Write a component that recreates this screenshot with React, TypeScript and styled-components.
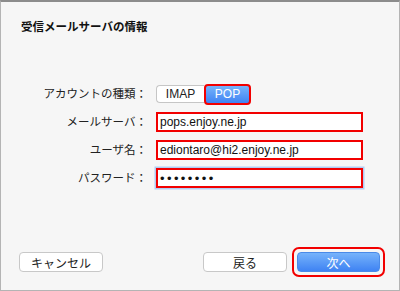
import React from 'react';
import styled, { createGlobalStyle } from 'styled-components';

const GlobalStyle = createGlobalStyle`
  html, body {
    margin: 0;
    padding: 0;
    background: #f6f6f6;
  }
  * {
    box-sizing: border-box;
  }
`;

const FONT = `"Liberation Sans", "Noto Sans CJK JP", sans-serif`;
const RED = '#f20000';
const BLUE_GRAD = 'linear-gradient(#76b3fb, #3f83f3)';

const Window = styled.div`
  width: 400px;
  height: 291px;
  display: flex;
  flex-direction: column;
  background: #f6f6f6;
  border: 1px solid #b4b4b4;
  border-top: 2px solid #8c8c8c;
  font-family: ${FONT};
  font-size: 12px;
  color: #222;
`;

const Title = styled.h1`
  margin: 17px 0 0 20px;
  font-size: 11.5px;
  line-height: 16px;
  font-weight: bold;
  color: #111;
`;

const Form = styled.div`
  margin-top: 49px;
  display: grid;
  grid-template-columns: 146px 207px;
  grid-auto-rows: 20px;
  column-gap: 9px;
  row-gap: 8px;
  align-items: center;
`;

const Label = styled.div`
  text-align: right;
  line-height: 20px;
  font-size: 11.5px;
  white-space: nowrap;
`;

const Segmented = styled.div`
  display: flex;
  align-items: center;
  height: 21px;
`;

const Segment = styled.div<{ $active?: boolean }>`
  height: ${(p) => (p.$active ? '21px' : '18px')};
  display: flex;
  align-items: center;
  justify-content: center;
  width: ${(p) => (p.$active ? '47px' : '48px')};
  background: ${(p) => (p.$active ? BLUE_GRAD : '#ffffff')};
  color: ${(p) => (p.$active ? '#ffffff' : '#222')};
  border: ${(p) => (p.$active ? `2px solid ${RED}` : '1px solid #c6c6c6')};
  border-right: ${(p) => (p.$active ? `2px solid ${RED}` : 'none')};
  border-radius: ${(p) => (p.$active ? '4px' : '4px 0 0 4px')};
  font-size: 12px;
`;

const Field = styled.div<{ $focused?: boolean }>`
  height: 20px;
  width: 207px;
  display: flex;
  align-items: center;
  padding-left: 2px;
  background: #fff;
  border: 2px solid ${RED};
  box-shadow: ${(p) => (p.$focused ? '0 0 0 1.5px #b1cdf3' : 'none')};
  color: #111;
  white-space: nowrap;
`;

const Dots = styled.span`
  font-size: 13px;
  letter-spacing: 2.4px;
  line-height: 1;
`;

const Footer = styled.div`
  margin-top: auto;
  padding: 0 14px 13px 18px;
  display: flex;
  align-items: center;
  justify-content: space-between;
`;

const RightGroup = styled.div`
  display: flex;
  align-items: center;
  gap: 5px;
`;

const Button = styled.div<{ $primary?: boolean }>`
  width: ${(p) => (p.$primary ? '83px' : '84px')};
  height: 20px;
  display: flex;
  align-items: center;
  justify-content: center;
  border-radius: 4px;
  background: ${(p) => (p.$primary ? BLUE_GRAD : '#ffffff')};
  color: ${(p) => (p.$primary ? '#ffffff' : '#222')};
  border: 1px solid ${(p) => (p.$primary ? '#4a8ae8' : '#c8c8c8')};
  font-size: 12px;
`;

const Highlight = styled.div`
  width: 93px;
  height: 30px;
  display: flex;
  align-items: center;
  justify-content: center;
  border: 2px solid ${RED};
  border-radius: 7px;
`;

export default function App() {
  return (
    <>
      <GlobalStyle />
      <Window>
        <Title>受信メールサーバの情報</Title>
        <Form>
          <Label>アカウントの種類：</Label>
          <Segmented>
            <Segment>IMAP</Segment>
            <Segment $active>POP</Segment>
          </Segmented>
          <Label>メールサーバ：</Label>
          <Field>pops.enjoy.ne.jp</Field>
          <Label>ユーザ名：</Label>
          <Field>ediontaro@hi2.enjoy.ne.jp</Field>
          <Label>パスワード：</Label>
          <Field $focused>
            <Dots>••••••••</Dots>
          </Field>
        </Form>
        <Footer>
          <Button>キャンセル</Button>
          <RightGroup>
            <Button>戻る</Button>
            <Highlight>
              <Button $primary>次へ</Button>
            </Highlight>
          </RightGroup>
        </Footer>
      </Window>
    </>
  );
}
